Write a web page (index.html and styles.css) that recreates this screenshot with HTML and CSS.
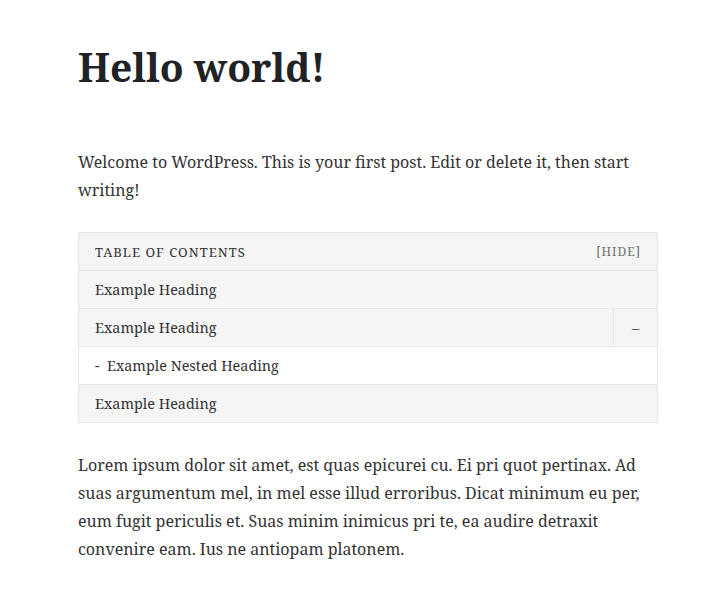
FILE: index.html
```html
<!DOCTYPE html>
<html lang="en">
<head>
<meta charset="utf-8">
<title>Hello world!</title>
<link rel="stylesheet" href="styles.css">
</head>
<body>
<article class="post">
  <h1 class="post-title">Hello world!</h1>
  <div class="post-content">
    <p>Welcome to WordPress. This is your first post. Edit or delete it, then start writing!</p>
    <nav class="toc">
      <div class="toc-head">
        <span class="toc-title">Table of Contents</span>
        <span class="toc-hide">[hide]</span>
      </div>
      <ul class="toc-list">
        <li class="toc-row"><span class="toc-link">Example Heading</span></li>
        <li class="toc-row toc-parent"><span class="toc-link">Example Heading</span><span class="toc-toggle">–</span></li>
        <li class="toc-row toc-nested"><span class="toc-link">-&nbsp; Example Nested Heading</span></li>
        <li class="toc-row"><span class="toc-link">Example Heading</span></li>
      </ul>
    </nav>
    <p>Lorem ipsum dolor sit amet, est quas epicurei cu. Ei pri quot pertinax. Ad suas argumentum mel, in mel esse illud erroribus. Dicat minimum eu per, eum fugit periculis et. Suas minim inimicus pri te, ea audire detraxit convenire eam. Ius ne antiopam platonem.</p>
  </div>
</article>
</body>
</html>
```
FILE: styles.css
```css
html, body {
  margin: 0;
  padding: 0;
  background: #fff;
}
body {
  font-family: "Noto Serif", "DejaVu Serif", "Liberation Serif", serif;
  color: #333;
  font-size: 16px;
  line-height: 28px;
}
.post {
  padding: 43px 70px 0 78px;
}
.post-title {
  margin: 0 0 57px;
  font-size: 39px;
  line-height: 48px;
  font-weight: 700;
  color: #1f2326;
}
.post-content p {
  margin: 0 0 28px;
}
.toc {
  border: 1px solid #e8e8e8;
  background: #f5f5f5;
  margin: 0 0 28px;
  font-size: 14.4px;
  line-height: 20px;
}
.toc-head {
  display: flex;
  justify-content: space-between;
  align-items: center;
  height: 37px;
  padding: 0 16px;
  border-bottom: 1px solid #e8e8e8;
}
.toc-title {
  text-transform: uppercase;
  letter-spacing: 1px;
  font-size: 13px;
  color: #333;
}
.toc-hide {
  text-transform: uppercase;
  letter-spacing: 1px;
  font-size: 12px;
  color: #707070;
}
.toc-list {
  list-style: none;
  margin: 0;
  padding: 0;
}
.toc-row {
  display: flex;
  align-items: stretch;
  height: 37px;
  border-bottom: 1px solid #e8e8e8;
}
.toc-row:last-child {
  border-bottom: none;
}
.toc-link {
  flex: 1;
  display: flex;
  align-items: center;
  padding: 0 16px;
}
.toc-nested {
  background: #fff;
}
.toc-toggle {
  width: 43px;
  display: flex;
  align-items: center;
  justify-content: center;
  border-left: 1px solid #e8e8e8;
  color: #555;
}
```
